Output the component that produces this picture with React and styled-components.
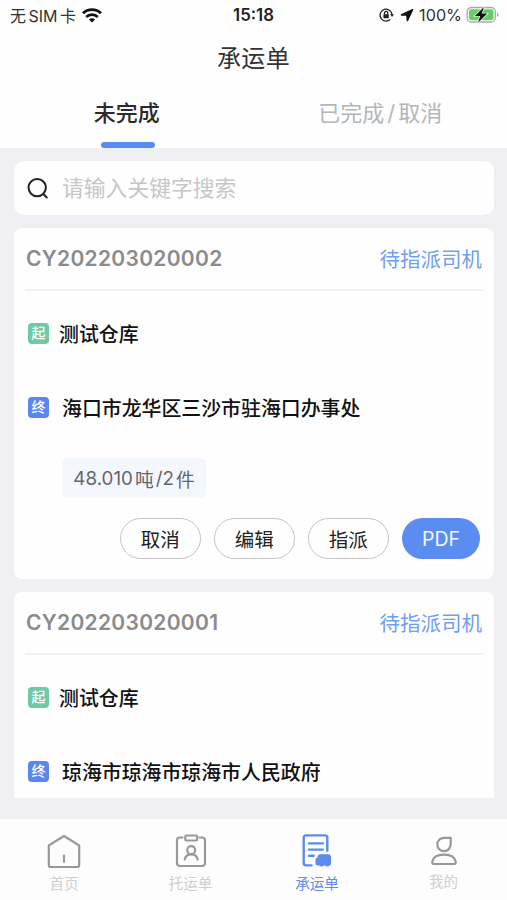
import React from "react";
import styled, { createGlobalStyle } from "styled-components";

const GlobalStyle = createGlobalStyle`
  * { box-sizing: border-box; }
  body { margin: 0; background: #efeff4; }
  button { font: inherit; }
`;

const Screen = styled.div`
  width: 507px;
  height: 900px;
  display: flex;
  flex-direction: column;
  overflow: hidden;
  background: #efeff4;
  color: #111;
  font-family: Inter, "Noto Sans CJK SC", sans-serif;
  white-space: nowrap;
`;

const Header = styled.header`
  height: 148px;
  flex: none;
  background: #fefefe;
`;

const StatusBar = styled.div`
  height: 30px;
  display: grid;
  grid-template-columns: 1fr auto 1fr;
  align-items: center;
  padding: 0 8px 0 10px;
  font-size: 16px;
  color: #333;
`;

const Carrier = styled.div`
  display: flex;
  align-items: center;
  gap: 6px;
  word-spacing: -2px;
`;

const Clock = styled.div`
  margin-right: 2px;
  font-size: 16.8px;
  font-weight: 600;
  color: #222;
`;

const Indicators = styled.div`
  display: flex;
  align-items: center;
  justify-content: flex-end;
  gap: 5px;
`;

const Charge = styled.span`
  margin-right: -1px;
  font-size: 16.2px;
`;

const Title = styled.h1`
  margin: 0;
  height: 56px;
  line-height: 58px;
  text-align: center;
  font-size: 24px;
  font-weight: 400;
  letter-spacing: 0.4px;
  color: #333;
`;

const Tabs = styled.div`
  height: 62px;
  display: grid;
  grid-template-columns: 1fr 1fr;
`;

const Tab = styled.div`
  display: flex;
  flex-direction: column;
  align-items: center;
  justify-content: space-between;
  line-height: 54px;
  font-size: 22px;
  font-weight: ${(p) => (p.$active ? 500 : 400)};
  color: ${(p) => (p.$active ? "#2b2b2b" : "#b2b6ba")};

  &::after {
    content: "";
    width: 54px;
    height: 6px;
    margin-left: 2px;
    border-radius: 3px;
    background: ${(p) => (p.$active ? "#5b8cf0" : "transparent")};
  }
`;

const Slash = styled.span`
  margin: 0 3px;
`;

const Content = styled.main`
  height: 650px;
  flex: none;
  overflow: hidden;
  display: flex;
  flex-direction: column;
  gap: 13px;
  padding: 13px 13px 0 14px;
`;

const SearchBox = styled.div`
  height: 54px;
  flex: none;
  display: flex;
  align-items: center;
  gap: 13px;
  padding-left: 13px;
  border-radius: 10px;
  background: #fefefe;
  color: #c6c6c6;
  font-size: 21.8px;
  line-height: 30px;
`;

const Card = styled.section`
  height: 351px;
  flex: none;
  padding: 0 10px 0 11px;
  border-radius: 8px;
  background: #fefefe;
`;

const CardHead = styled.div`
  height: 63px;
  display: flex;
  align-items: center;
  justify-content: space-between;
  padding: 0 2px 0 1px;
  border-bottom: 2px solid #f2f2f3;
`;

const OrderNo = styled.div`
  font-size: 21px;
  font-weight: 600;
  letter-spacing: 0.3px;
  color: #8b8b8b;
`;

const State = styled.div`
  padding-bottom: 2px;
  font-size: 20.5px;
  color: #6f9ff0;
`;

const Stop = styled.div`
  height: 74px;
  display: flex;
  align-items: center;
  gap: ${(p) => p.$gap}px;
  padding-left: 3px;
  margin-top: ${(p) => p.$top || 0}px;
  font-size: 19.9px;
  font-weight: 500;
  color: #111;
`;

const Tag = styled.span`
  width: 21px;
  height: 21px;
  display: flex;
  align-items: center;
  justify-content: center;
  border-radius: 4px;
  background: ${(p) => p.$color};
  color: #fff;
  font-size: 14px;
  line-height: 1;
`;

const Load = styled.div`
  width: 144px;
  height: 40px;
  display: flex;
  align-items: center;
  justify-content: center;
  gap: 2px;
  margin: 14px 0 0 37px;
  border-radius: 5px;
  background: #f4f7fe;
  color: #666;
  font-size: 18.8px;
`;

const Actions = styled.div`
  display: flex;
  justify-content: flex-end;
  gap: 13.5px;
  padding-right: 4px;
  margin-top: 20px;
`;

const Action = styled.button`
  width: ${(p) => (p.$primary ? 78 : 80.5)}px;
  height: 41px;
  padding: 0;
  border-radius: 21px;
  border: ${(p) => (p.$primary ? "0" : "1.5px solid #c4c4c4")};
  background: ${(p) => (p.$primary ? "#5b8cf2" : "#fefefe")};
  color: ${(p) => (p.$primary ? "#f4f7ff" : "#222")};
  font-size: 19.5px;
`;

const NavBar = styled.nav`
  height: 81px;
  margin-top: 21px;
  flex: none;
  display: grid;
  grid-template-columns: repeat(4, 1fr);
  padding: 0 0.2px 0 0.8px;
  background: #fdfdfd;
`;

const NavItem = styled.div`
  display: flex;
  flex-direction: column;
  align-items: center;
  gap: 4px;
  padding-top: ${(p) => p.$top || 14}px;
  font-size: 14.6px;
  line-height: 22px;
  color: ${(p) => (p.$active ? "#5b8cf0" : "#cfcfcf")};

  svg { color: ${(p) => (p.$active ? "#5b8cf0" : "#999")}; }
`;

const WifiIcon = () => (
  <svg width="20" height="15" viewBox="0 0 20 15" fill="none" stroke="#111" strokeWidth="2.8">
    <path d="M1 5.3a13 13 0 0 1 18 0M4.2 8.9a8.5 8.5 0 0 1 11.6 0" />
    <path d="M10 14.5 6.9 11.6a4.6 4.6 0 0 1 6.2 0z" fill="#111" stroke="none" />
  </svg>
);

const LockIcon = () => (
  <svg width="16" height="14" viewBox="0 0 16 14" fill="none" stroke="#222" strokeWidth="1.3">
    <path d="M12.3 4.2A6 6 0 1 0 11.2 11.5M12.3 4.2A6 6 0 0 1 13 7" />
    <path d="m11 6.3 2.1 2.6 1.8-2.6z" fill="#222" stroke="none" />
    <path d="M5.5 6.5V5a1.6 1.6 0 0 1 3.2 0v1.5" />
    <rect x="4.4" y="6.2" width="5.4" height="4" rx=".6" fill="#222" stroke="none" />
  </svg>
);

const LocationIcon = () => (
  <svg width="14" height="14" viewBox="0 0 14 14">
    <path d="M12.6 1.6 1.4 7h5.4L7.4 12.6z" fill="#111" stroke="#111" strokeWidth="1.4" strokeLinejoin="round" />
  </svg>
);

const BatteryIcon = () => (
  <svg width="33" height="18" viewBox="0 0 33 18">
    <rect x="1.2" y="1.5" width="28.1" height="14.5" rx="4.3" fill="#fefefe" stroke="#aaa" strokeWidth="1.3" />
    <rect x="3" y="3.3" width="24.5" height="10.9" rx="2.5" fill="#65ce65" />
    <path d="M31 6.3q1.5.7 1.5 2.4T31 11.1z" fill="#aaa" />
    <path d="M18 1 8.8 9.9h5.4L12 16.8l9.3-9.2h-5.5z" fill="#111" stroke="#fefefe" strokeWidth="1.3" paintOrder="stroke" />
  </svg>
);

const SearchIcon = () => (
  <svg width="22" height="22" viewBox="0 0 22 22" fill="none" stroke="#222" strokeWidth="2" strokeLinecap="round">
    <circle cx="10.2" cy="10.6" r="8.7" />
    <path d="m16.5 17.2 3.3 3.3" />
  </svg>
);

const HomeIcon = () => (
  <svg width="36" height="36" viewBox="0 0 36 36" fill="none" stroke="currentColor" strokeWidth="2.2" strokeLinejoin="round" strokeLinecap="round">
    <path d="M18 3 33.2 12.5V32q0 2-2 2H4.800q-2 0-2-2V12.500z" />
    <path d="M18 22.500V29" />
  </svg>
);

const ConsignIcon = () => (
  <svg width="36" height="36" viewBox="0 0 36 36" fill="none" stroke="currentColor" strokeWidth="2.2" strokeLinecap="round" strokeLinejoin="round">
    <path d="M9.5 4.5H7q-3 0-3 3V30q0 3 3 3h22q3 0 3-3V7.500q0-3-3-3h-2.500" />
    <rect x="12.3" y="2.500" width="11.8" height="5" rx="1" />
    <circle cx="18.2" cy="17.200" r="4" />
    <path d="M11.7 26.500q1-5.200 6.500-5.200t6.500 5.200" />
  </svg>
);

const CarrierIcon = () => (
  <svg width="36" height="36" viewBox="0 0 36 36" fill="none" stroke="currentColor" strokeWidth="2.4" strokeLinecap="round" strokeLinejoin="round">
    <path d="M12.5 32.4H7q-2.3 0-2.3-2.3V4.7q0-2.3 2.3-2.3h19q2.3 0 2.3 2.3v13" />
    <path d="M10 10.4h13.8M10 16.6h13.8M10 22.8h4.7" />
    <path
      d="M21.3 22h8q2 0 2 2v6.700q0 1.200-1.200 1.200 0 1-1.500 1t-1.500-1h-3q0 1-1.500 1t-1.500-1H18.700q-1.500 0-1.500-1.500v-3.400q.2-1.700 2-2.300 0-2.700 2.100-2.700z"
      fill="currentColor"
      strokeWidth="1.4"
    />
  </svg>
);

const ProfileIcon = () => (
  <svg width="30" height="32" viewBox="0 0 30 32" fill="none" stroke="currentColor" strokeWidth="2.2" strokeLinejoin="round">
    <path d="M15 2.8h6.7v6.5A6.7 6.7 0 1 1 15 2.8z" />
    <path d="M5.2 29h19.6q2.2 0 1.9-2.2c-.8-4.7-5.4-7.2-11.7-7.2S4.1 22.1 3.3 26.8Q3 29 5.2 29z" />
  </svg>
);

const orders = [
  {
    no: "CY202203020002",
    to: "海口市龙华区三沙市驻海口办事处",
    load: ["48.010", "吨", "/2", "件"],
  },
  { no: "CY202203020001", to: "琼海市琼海市琼海市人民政府" },
];

const OrderCard = ({ order }) => (
  <Card>
    <CardHead>
      <OrderNo>{order.no}</OrderNo>
      <State>待指派司机</State>
    </CardHead>
    <Stop $gap={10} $top={5}>
      <Tag $color="#70c9a5">起</Tag>
      测试仓库
    </Stop>
    <Stop $gap={13}>
      <Tag $color="#5887f2">终</Tag>
      {order.to}
    </Stop>
    {order.load && (
      <>
        <Load>
          {order.load.map((part) => (
            <span key={part}>{part}</span>
          ))}
        </Load>
        <Actions>
          <Action>取消</Action>
          <Action>编辑</Action>
          <Action>指派</Action>
          <Action $primary>PDF</Action>
        </Actions>
      </>
    )}
  </Card>
);

export default function App() {
  return (
    <Screen>
      <GlobalStyle />
      <Header>
        <StatusBar>
          <Carrier>
            <span>无 SIM 卡</span>
            <WifiIcon />
          </Carrier>
          <Clock>15:18</Clock>
          <Indicators>
            <LockIcon />
            <LocationIcon />
            <Charge>100%</Charge>
            <BatteryIcon />
          </Indicators>
        </StatusBar>
        <Title>承运单</Title>
        <Tabs>
          <Tab $active>未完成</Tab>
          <Tab>
            <span>
              已完成<Slash>/</Slash>取消
            </span>
          </Tab>
        </Tabs>
      </Header>
      <Content>
        <SearchBox>
          <SearchIcon />
          <span>请输入关键字搜索</span>
        </SearchBox>
        {orders.map((order) => (
          <OrderCard key={order.no} order={order} />
        ))}
      </Content>
      <NavBar>
        <NavItem>
          <HomeIcon />
          首页
        </NavItem>
        <NavItem>
          <ConsignIcon />
          托运单
        </NavItem>
        <NavItem $active>
          <CarrierIcon />
          承运单
        </NavItem>
        <NavItem $top={16}>
          <ProfileIcon />
          我的
        </NavItem>
      </NavBar>
    </Screen>
  );
}
